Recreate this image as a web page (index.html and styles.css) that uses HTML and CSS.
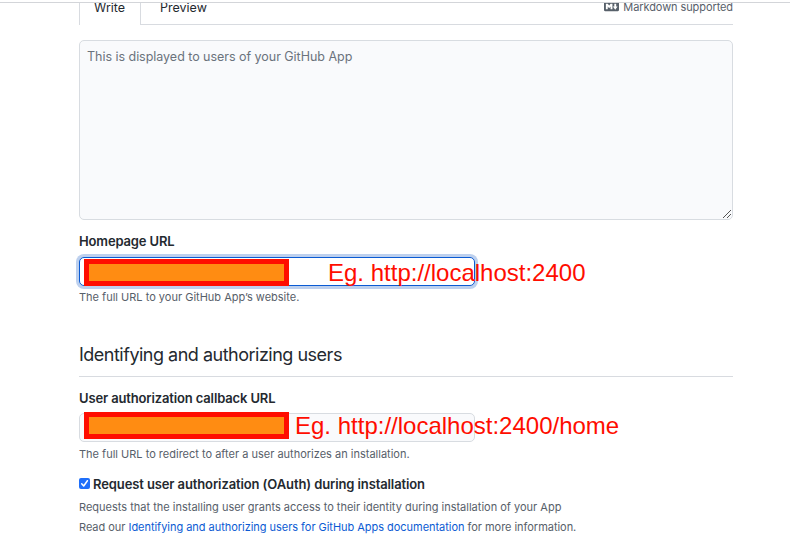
FILE: index.html
```html
<!DOCTYPE html>
<html lang="en">
<head>
<meta charset="utf-8">
<title>Register GitHub App</title>
<link rel="stylesheet" href="styles.css">
</head>
<body>
<main class="form">
  <div class="tabs">
    <div class="tab tab-active"><span>Write</span></div>
    <div class="tab"><span>Preview</span></div>
    <div class="markdown">
      <svg width="15" height="15" viewBox="0 0 16 16" fill="currentColor"><path fill-rule="evenodd" d="M14.85 3H1.15C.52 3 0 3.52 0 4.15v7.69C0 12.48.52 13 1.15 13h13.69c.64 0 1.15-.52 1.15-1.15v-7.7C16 3.52 15.48 3 14.85 3zM9 11H7V8L5.5 9.92 4 8v3H2V5h2l1.5 2L7 5h2v6zm2.99.5L9.5 8H11V5h2v3h1.5l-2.51 3.5z"/></svg>
      <span>Markdown supported</span>
    </div>
  </div>
  <div class="textarea">
    <span>This is displayed to users of your GitHub App</span>
    <svg class="grip" width="8" height="8" viewBox="0 0 8 8" shape-rendering="crispEdges"><path d="M0 7h1v1H0zM1 6h1v1H1zM2 5h1v1H2zM3 4h1v1H3zM4 3h1v1H4zM5 2h1v1H5zM6 1h1v1H6zM7 0h1v1H7zM4 7h1v1H4zM5 6h1v1H5zM6 5h1v1H6zM7 4h1v1H7z"/></svg>
  </div>
  <div class="label label-home"><span>Homepage URL</span></div>
  <div class="input input-focus">
    <span class="redacted"></span><span class="example example-home">Eg. http://localhost:2400</span>
  </div>
  <p class="note note-home"><span>The full URL to your GitHub App’s website.</span></p>
  <h2><span>Identifying and authorizing users</span></h2>
  <div class="label label-callback"><span>User authorization callback URL</span></div>
  <div class="input input-callback">
    <span class="redacted"></span><span class="example example-callback">Eg. http://localhost:2400/home</span>
  </div>
  <p class="note note-callback"><span>The full URL to redirect to after a user authorizes an installation.</span></p>
  <div class="check">
    <svg width="11" height="11" viewBox="0 0 11 11"><rect width="11" height="11" rx="2" fill="#1f6ffa"/><path d="M2.7 5.8 4.7 8 8.4 2.7" fill="none" stroke="#fff" stroke-width="1.5" stroke-linecap="round" stroke-linejoin="round"/></svg>
    <span>Request user authorization (OAuth) during installation</span>
  </div>
  <p class="note note-request"><span>Requests that the installing user grants access to their identity during installation of your App</span></p>
  <p class="note note-read"><span>Read our <a href="#">Identifying and authorizing users for GitHub Apps documentation</a> for more information.</span></p>
</main>
</body>
</html>
```
FILE: styles.css
```css
* { box-sizing: border-box; }
body { margin: 0; padding-top: 2px; height: 554px; overflow: hidden; background: #fff; color: #24292f; font-family: Inter, "Liberation Sans", sans-serif; font-size: 13px; }
span { white-space: nowrap; }
.form { border-top: 1px solid #d3d5d9; padding: 0 57px 0 79px; height: 552px; overflow: hidden; }
.tabs { display: flex; height: 22px; border-bottom: 1px solid #d8dbe0; }
.tab { height: 22px; padding-left: 19px; line-height: 16px; margin-top: -3px; font-size: 12.5px; }
.tab-active { margin-top: 0; width: 62px; padding-left: 14px; line-height: 10px; background: #fff; border: solid #d8dbe0; border-width: 0 1px; }
.markdown { display: flex; margin: -4px 0 0 auto; height: 16px; align-items: center; gap: 4px; color: #57606a; font-size: 11px; letter-spacing: -0.09px; }
.markdown svg { margin-top: -2px; }
.textarea { position: relative; height: 180px; margin-top: 15px; border: 1px solid #d8dce1; border-radius: 5px; background: #f9fafc; padding: 6px 7px; line-height: 20px; color: #6b737c; font-size: 12.5px; letter-spacing: -0.03px; }
.grip { position: absolute; right: 1px; bottom: 1px; fill: #555; }
.label { height: 20px; line-height: 20px; font-weight: 600; letter-spacing: -0.14px; }
.label-home { margin-top: 11px; }
.input { display: flex; width: 396px; height: 29px; border: 1px solid #d8dce1; border-radius: 5px; background: #f9fafc; padding-left: 4px; }
.input-focus { margin-top: 6px; background: #fff; border-color: #0b5bd3; box-shadow: 0 0 0 3px #bdd0ee; padding-top: 1px; }
.input-callback { margin-top: 5px; }
.redacted { flex: none; width: 205px; height: 27px; background: #ff8c12; border: 5px solid #ff0d00; }
.input-callback .redacted { margin-top: -2px; }
.example { font: 24px/27px "Liberation Sans", sans-serif; color: #ff0d00; }
.example-home { margin-left: 39px; }
.example-callback { margin: -2px 0 0 6px; }
.note { margin: 0; height: 16px; line-height: 16px; font-size: 11px; color: #57606a; }
.note-home { margin-top: 3px; }
h2 { margin: 37px 0 0; height: 35px; line-height: 26px; border-bottom: 1px solid #d8dbe0; font-size: 18px; font-weight: 400; letter-spacing: -0.5px; }
.label-callback { margin-top: 11px; }
.note-callback { margin-top: 4px; }
.check { display: flex; margin-top: 12px; height: 20px; align-items: center; gap: 3px; font-weight: 600; letter-spacing: -0.11px; }
.check svg { margin-top: -1px; }
.note-request { margin-top: 5px; }
.note-read { margin-top: 4px; letter-spacing: -0.035px; }
a { color: #0b5bd3; text-decoration: none; }
```
